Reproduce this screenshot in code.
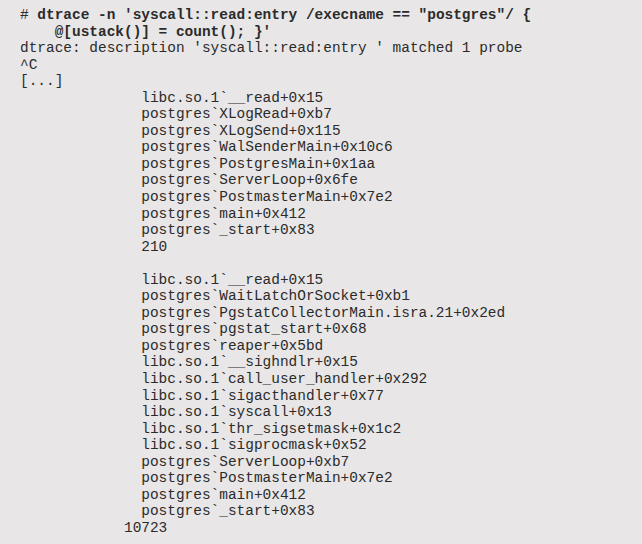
import React from 'react';

// dtrace 출력 (stack 집계)
const output = `dtrace: description 'syscall::read:entry ' matched 1 probe
^C
[...]
              libc.so.1\`__read+0x15
              postgres\`XLogRead+0xb7
              postgres\`XLogSend+0x115
              postgres\`WalSenderMain+0x10c6
              postgres\`PostgresMain+0x1aa
              postgres\`ServerLoop+0x6fe
              postgres\`PostmasterMain+0x7e2
              postgres\`main+0x412
              postgres\`_start+0x83
              210

              libc.so.1\`__read+0x15
              postgres\`WaitLatchOrSocket+0xb1
              postgres\`PgstatCollectorMain.isra.21+0x2ed
              postgres\`pgstat_start+0x68
              postgres\`reaper+0x5bd
              libc.so.1\`__sighndlr+0x15
              libc.so.1\`call_user_handler+0x292
              libc.so.1\`sigacthandler+0x77
              libc.so.1\`syscall+0x13
              libc.so.1\`thr_sigsetmask+0x1c2
              libc.so.1\`sigprocmask+0x52
              postgres\`ServerLoop+0xb7
              postgres\`PostmasterMain+0x7e2
              postgres\`main+0x412
              postgres\`_start+0x83
            10723`;

export default function App() {
  return (
    <div className="w-[642px] h-[544px] overflow-hidden bg-[#e8e6e7]">
      <pre className="pl-[20px] pt-[7px] text-[14.45px] leading-[16.55px] text-[#2b2b2b] font-['Liberation_Mono','Courier_New',monospace]">
        <span>#</span>
        <span className="font-bold">{` dtrace -n 'syscall::read:entry /execname == "postgres"/ {`}</span>
        {'\n'}
        <span className="font-bold">{`    @[ustack()] = count(); }'`}</span>
        {'\n'}
        {output}
      </pre>
    </div>
  );
}
